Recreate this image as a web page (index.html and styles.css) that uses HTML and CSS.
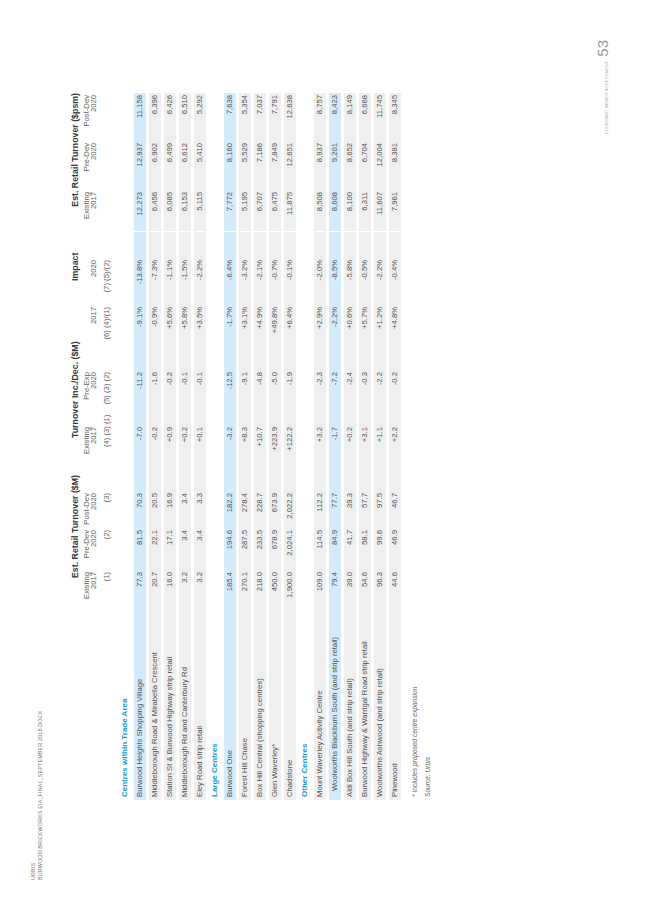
FILE: index.html
```html
<!DOCTYPE html>
<html lang="en">
<head>
<meta charset="utf-8">
<title>Burwood Brickworks – Turnover impacts</title>
<link rel="stylesheet" href="styles.css">
</head>
<body>
<div class="sheet">
<div class="page">
  <header class="doc-head">
    <div class="brand">URBIS</div>
    <div class="docname">BURWOOD BRICKWORKS EIA_FINAL_SEPTEMBER 2018.DOCX</div>
  </header>

  <main class="main">
    <table class="data">
      <colgroup>
        <col class="w-label"><col class="w1"><col class="w2"><col class="w3"><col class="w4"><col class="w5"><col class="w6"><col class="w7"><col class="w8"><col class="w9"><col class="w10">
      </colgroup>
      <thead>
        <tr class="t-title">
          <th></th>
          <th colspan="3" class="g1">Est. Retail Turnover ($M)</th>
          <th colspan="2" class="g2">Turnover Inc./Dec. ($M)</th>
          <th colspan="2" class="g3">Impact</th>
          <th colspan="3" class="g4">Est. Retail Turnover ($psm)</th>
        </tr>
        <tr class="t-sub">
          <th></th><th>Existing</th><th>Pre-Dev</th><th>Post-Dev</th><th>Existing</th><th>Pre-Exp</th><th></th><th></th><th>Existing</th><th>Pre-Dev</th><th>Post-Dev</th>
        </tr>
        <tr class="t-year">
          <th></th><th>2017</th><th>2020</th><th>2020</th><th>2017</th><th>2020</th><th>2017</th><th>2020</th><th>2017</th><th>2020</th><th>2020</th>
        </tr>
        <tr class="t-ref">
          <th></th><th>(1)</th><th>(2)</th><th>(3)</th><th class="ref4">(4) (3) (1)</th><th>(5) (3) (2)</th><th>(6) (4)/(1)</th><th>(7) (5)/(2)</th><th></th><th></th><th></th>
        </tr>
      </thead>
      <tbody>
        <tr class="sec"><td colspan="11">Centres within Trade Area</td></tr>
        <tr class="hl"><td>Burwood Heights Shopping Village</td><td>77.3</td><td>81.5</td><td>70.3</td><td>-7.0</td><td>-11.2</td><td>-9.1%</td><td>-13.8%</td><td>12,273</td><td>12,937</td><td>11,158</td></tr>
        <tr><td>Middleborough Road &amp; Mirabella Crescent</td><td>20.7</td><td>22.1</td><td>20.5</td><td>-0.2</td><td>-1.6</td><td>-0.9%</td><td>-7.3%</td><td>6,456</td><td>6,902</td><td>6,396</td></tr>
        <tr><td>Station St &amp; Burwood Highway strip retail</td><td>16.0</td><td>17.1</td><td>16.9</td><td>+0.9</td><td>-0.2</td><td>+5.6%</td><td>-1.1%</td><td>6,085</td><td>6,499</td><td>6,426</td></tr>
        <tr><td>Middleborough Rd and Canterbury Rd</td><td>3.2</td><td>3.4</td><td>3.4</td><td>+0.2</td><td>-0.1</td><td>+5.8%</td><td>-1.5%</td><td>6,153</td><td>6,612</td><td>6,510</td></tr>
        <tr><td>Eley Road strip retail</td><td>3.2</td><td>3.4</td><td>3.3</td><td>+0.1</td><td>-0.1</td><td>+3.5%</td><td>-2.2%</td><td>5,115</td><td>5,410</td><td>5,292</td></tr>

        <tr class="sec"><td colspan="11">Large Centres</td></tr>
        <tr class="hl"><td>Burwood One</td><td>185.4</td><td>194.6</td><td>182.2</td><td>-3.2</td><td>-12.5</td><td>-1.7%</td><td>-6.4%</td><td>7,772</td><td>8,160</td><td>7,638</td></tr>
        <tr><td>Forest Hill Chase</td><td>270.1</td><td>287.5</td><td>278.4</td><td>+8.3</td><td>-9.1</td><td>+3.1%</td><td>-3.2%</td><td>5,195</td><td>5,529</td><td>5,354</td></tr>
        <tr><td>Box Hill Central (shopping centres)</td><td>218.0</td><td>233.5</td><td>228.7</td><td>+10.7</td><td>-4.8</td><td>+4.9%</td><td>-2.1%</td><td>6,707</td><td>7,186</td><td>7,037</td></tr>
        <tr><td>Glen Waverley*</td><td>450.0</td><td>678.9</td><td>673.9</td><td>+223.9</td><td>-5.0</td><td>+49.8%</td><td>-0.7%</td><td>6,475</td><td>7,849</td><td>7,791</td></tr>
        <tr><td>Chadstone</td><td>1,900.0</td><td>2,024.1</td><td>2,022.2</td><td>+122.2</td><td>-1.9</td><td>+6.4%</td><td>-0.1%</td><td>11,875</td><td>12,651</td><td>12,638</td></tr>

        <tr class="sec"><td colspan="11">Other Centres</td></tr>
        <tr><td>Mount Waverley Activity Centre</td><td>109.0</td><td>114.5</td><td>112.2</td><td>+3.2</td><td>-2.3</td><td>+2.9%</td><td>-2.0%</td><td>8,508</td><td>8,937</td><td>8,757</td></tr>
        <tr class="hl"><td class="indent">Woolworths Blackburn South (and strip retail)</td><td>79.4</td><td>84.9</td><td>77.7</td><td>-1.7</td><td>-7.2</td><td>-2.2%</td><td>-8.5%</td><td>8,608</td><td>9,201</td><td>8,423</td></tr>
        <tr><td>Aldi Box Hill South (and strip retail)</td><td>39.0</td><td>41.7</td><td>39.3</td><td>+0.2</td><td>-2.4</td><td>+0.6%</td><td>-5.8%</td><td>8,100</td><td>8,652</td><td>8,149</td></tr>
        <tr><td>Burwood Highway &amp; Warrigal Road strip retail</td><td>54.6</td><td>58.1</td><td>57.7</td><td>+3.1</td><td>-0.3</td><td>+5.7%</td><td>-0.5%</td><td>6,311</td><td>6,704</td><td>6,668</td></tr>
        <tr><td>Woolworths Ashwood (and strip retail)</td><td>96.3</td><td>99.6</td><td>97.5</td><td>+1.1</td><td>-2.2</td><td>+1.2%</td><td>-2.2%</td><td>11,607</td><td>12,004</td><td>11,745</td></tr>
        <tr><td>Pinewood</td><td>44.6</td><td>46.9</td><td>46.7</td><td>+2.2</td><td>-0.2</td><td>+4.8%</td><td>-0.4%</td><td>7,961</td><td>8,381</td><td>8,345</td></tr>
      </tbody>
    </table>

    <div class="notes">
      <p class="note">* Includes proposed centre expansion</p>
      <p class="note source">Source: Urbis</p>
    </div>
  </main>

  <footer class="doc-foot">
    <span class="foot-title">ECONOMIC IMPACT ASSESSMENT</span>
    <span class="page-no">53</span>
  </footer>
</div>
</div>
</body>
</html>
```

FILE: styles.css
```css
html, body {
  margin: 0;
  padding: 0;
  background: #ffffff;
}

body {
  font-family: "Liberation Sans", Arial, sans-serif;
  color: #525252;
}

/* portrait sheet that holds the rotated landscape page */
.sheet {
  width: 653px;
  height: 923px;
  overflow: hidden;
}

/* Landscape page, turned a quarter turn counter-clockwise */
.page {
  width: 923px;
  height: 653px;
  box-sizing: border-box;
  display: flex;
  flex-direction: column;
  transform-origin: 0 0;
  transform: translateY(923px) rotate(-90deg);
}

.doc-head {
  flex: none;
  height: 68px;
  box-sizing: border-box;
  padding: 30px 0 0 43px;
  font-size: 5.4px;
  line-height: 7px;
  color: #7a7a7a;
  letter-spacing: 0.15px;
}

.main {
  flex: 1;
  padding-left: 123px;
}

/* ---------- table ---------- */
.data {
  border-collapse: separate;
  border-spacing: 0;
  table-layout: fixed;
  width: 707px;
  font-size: 7.7px;
}

.w-label { width: 192px; }
.w1 { width: 36px; }
.w2 { width: 42px; }
.w3 { width: 37px; }
.w4 { width: 66px; }
.w5 { width: 55px; }
.w6 { width: 65px; }
.w7 { width: 75px; }
.w8 { width: 40px; }
.w9 { width: 49px; }
.w10 { width: 50px; }

.data th,
.data td {
  padding: 0;
  text-align: right;
  white-space: nowrap;
  font-weight: normal;
  overflow: visible;
}

.data th:first-child,
.data td:first-child {
  text-align: left;
  padding-left: 3px;
}

.data th:nth-child(8),
.data td:nth-child(8) {
  padding-right: 28px;
}

.data td:nth-child(9) {
  border-left: 1px solid #ffffff;
}

.data th:nth-child(11),
.data td:nth-child(11) {
  padding-right: 2px;
}

/* header rows: explicit heights so the stack is predictable */
.data thead th {
  vertical-align: top;
  color: #5e5e5e;
}

.data .t-title th {
  height: 13px;
  padding-top: 2px;
  line-height: 11px;
  font-size: 8.8px;
  font-weight: bold;
  color: #383838;
}

.t-title .g1 { text-align: left; padding-left: 30px; }
.t-title .g2 { text-align: left; padding-left: 55px; }
.t-title .g3 { text-align: left; padding-left: 91px; }
.t-title .g4 { text-align: right; }

.t-sub th {
  height: 7px;
  line-height: 7px;
}

.t-year th {
  height: 7px;
  line-height: 7px;
}

.t-ref th {
  height: 7px;
  line-height: 7px;
  padding-top: 6px;
  padding-bottom: 6px;
}

.data .t-ref .ref4 {
  text-align: left;
  padding-left: 46px;
}

/* body rows */
.data tbody td {
  height: 12px;
  line-height: 12px;
  border-top: 3px solid #ffffff;
  background: #efefef;
}

.data tbody tr.hl td {
  background: #d4ebfb;
}

.data tbody tr.sec td {
  background: transparent;
  color: #1c9ad8;
  font-weight: bold;
  font-size: 8px;
  text-align: left;
}

.data td.indent {
  padding-left: 9px;
}

/* notes */
.notes {
  margin-top: 10px;
  padding-left: 3px;
}

.note {
  margin: 0;
  font-size: 6.6px;
  line-height: 8px;
  font-style: italic;
  color: #666666;
}

.note.source {
  margin-top: 5px;
}

/* footer */
.doc-foot {
  flex: none;
  display: flex;
  justify-content: flex-end;
  align-items: baseline;
  gap: 4px;
  padding: 0 40px 43px 0;
}

.foot-title {
  font-size: 4.3px;
  letter-spacing: 0.1px;
  color: #b4b4b4;
}

.page-no {
  font-size: 15px;
  line-height: 15px;
  color: #9c9c9c;
}
```
